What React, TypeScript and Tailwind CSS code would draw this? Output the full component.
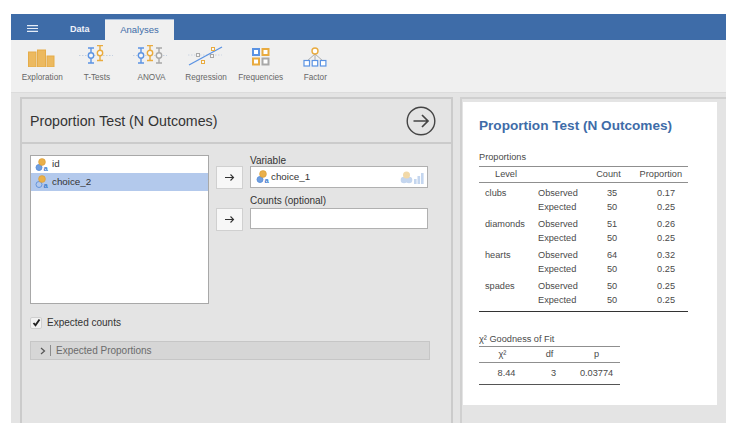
import { ReactNode } from "react";

const BLUE = "#5b93e3";
const ORANGE = "#e9ab3f";
const GREY = "#a8a8a8";

// error-bar glyph used by T-Tests / ANOVA
function Whisker({ x, y, h, c }: { x: number; y: number; h: number; c: string }) {
  return (
    <g stroke={c} strokeWidth="1.4" fill="none">
      <path d={`M${x - 3} ${y}h6M${x - 3} ${y + h}h6M${x} ${y}v${h / 2 - 3}M${x} ${y + h / 2 + 3}v${h / 2 - 3}`} />
      <circle cx={x} cy={y + h / 2} r="2.7" fill="#f7f7f7" />
    </g>
  );
}

function Exploration() {
  return (
    <svg width="30" height="20" viewBox="0 0 30 20">
      <rect x="1.5" y="5" width="7.5" height="15" fill="#ecb95f" stroke="#e5ac49" />
      <rect x="10.5" y="3" width="8" height="17" fill="#ecb95f" stroke="#e5ac49" />
      <rect x="20" y="9" width="7" height="11" fill="#ecb95f" stroke="#e5ac49" />
    </svg>
  );
}

function TTests() {
  return (
    <svg width="36" height="22" viewBox="0 0 36 22">
      <path d="M0 10.5h34" stroke="#b9c8dc" strokeWidth="0.8" strokeDasharray="1.5 1.5" />
      <Whisker x={12} y={3} h={15} c={BLUE} />
      <Whisker x={21} y={0.5} h={15} c={ORANGE} />
    </svg>
  );
}

function Anova() {
  return (
    <svg width="36" height="22" viewBox="0 0 36 22">
      <path d="M0 10.5h34" stroke="#b9c8dc" strokeWidth="0.8" strokeDasharray="1.5 1.5" />
      <Whisker x={8} y={3} h={15} c={BLUE} />
      <Whisker x={17} y={0.5} h={15} c={ORANGE} />
      <Whisker x={26} y={3} h={15} c={GREY} />
    </svg>
  );
}

function Regression() {
  return (
    <svg width="36" height="22" viewBox="0 0 36 22">
      <path d="M0 10h34" stroke="#c3cede" strokeWidth="0.8" strokeDasharray="1.5 1.5" />
      <path d="M1 20L34 2" stroke={BLUE} strokeWidth="1.3" />
      <g fill="#f7f7f7" strokeWidth="1">
        <rect x="8.5" y="8.5" width="3" height="3" stroke={GREY} />
        <rect x="13.5" y="15.5" width="3" height="3" stroke={ORANGE} />
        <rect x="23.5" y="2.5" width="3" height="3" stroke={ORANGE} />
        <rect x="22.5" y="9.5" width="3" height="3" stroke={GREY} />
      </g>
    </svg>
  );
}

function Frequencies() {
  return (
    <svg width="20" height="20" viewBox="0 0 20 20">
      <rect x="2" y="2" width="6" height="6" fill="#fff" stroke={BLUE} strokeWidth="2" />
      <rect x="11.5" y="2" width="6" height="6" fill="#fff" stroke={ORANGE} strokeWidth="2" />
      <rect x="2" y="11.5" width="6" height="6" fill="#fff" stroke={ORANGE} strokeWidth="2" />
      <rect x="11.5" y="11.5" width="6" height="6" fill="#fff" stroke={GREY} strokeWidth="2" />
    </svg>
  );
}

function Factor() {
  return (
    <svg width="24" height="20" viewBox="0 0 24 20">
      <path d="M12 7L4 14M12 7v7M12 7l8 7" stroke="#9a9a9a" strokeWidth="0.8" fill="none" />
      <circle cx="12" cy="4" r="3" fill="#fff" stroke={ORANGE} strokeWidth="1.4" />
      <g fill="#fff" stroke={BLUE} strokeWidth="1.2">
        <rect x="1" y="13.5" width="5.5" height="5.5" />
        <rect x="9.2" y="13.5" width="5.5" height="5.5" />
        <rect x="17.4" y="13.5" width="5.5" height="5.5" />
      </g>
    </svg>
  );
}

// nominal text variable icon
function VarIcon({ hollow = false }: { hollow?: boolean }) {
  return (
    <svg width="14" height="14" viewBox="0 0 14 14" className="shrink-0">
      <circle cx="4" cy="9.5" r="3" fill={hollow ? "none" : "#6f9fe0"} stroke="#5b8fd8" strokeWidth="0.9" />
      <circle cx="7" cy="4" r="3.4" fill="#eab04a" stroke="#d99a34" strokeWidth="0.6" />
      <text x="8.6" y="13" fontSize="7.5" fontWeight="700" fill="#3f7fd0" fontFamily="Liberation Sans">a</text>
    </svg>
  );
}

function ArrowButton() {
  return (
    <div className="w-[27px] h-[23px] bg-[#f7f7f7] border border-[#d0d0d0] flex items-center justify-center">
      <svg width="11" height="9" viewBox="0 0 11 9" fill="none" stroke="#333" strokeWidth="1.1">
        <path d="M1 4.5h8.5M6.5 1.5l3 3-3 3" />
      </svg>
    </div>
  );
}

function Tool({ icon, label }: { icon: ReactNode; label: string }) {
  return (
    <div className="w-[54.6px] flex flex-col items-center">
      <div className="h-[24px] flex items-end justify-center">{icon}</div>
      <div className="mt-[5px] text-[8.2px] leading-[11px] text-[#666] whitespace-nowrap">{label}</div>
    </div>
  );
}

const levels = [
  { name: "clubs", obs: 35, op: "0.17", ep: "0.25" },
  { name: "diamonds", obs: 51, op: "0.26", ep: "0.25" },
  { name: "hearts", obs: 64, op: "0.32", ep: "0.25" },
  { name: "spades", obs: 50, op: "0.25", ep: "0.25" },
];

function ProportionRow({ group, kind, count, prop }: { group: string; kind: string; count: number; prop: string }) {
  return (
    <div className="flex h-[13.5px] leading-[13.5px]">
      <span className="w-[59px] pl-[6px]">{group}</span>
      <span className="w-[61px]">{kind}</span>
      <span className="w-[26px] text-center">{count}</span>
      <span className="w-[50px] text-right">{prop}</span>
    </div>
  );
}

export default function App() {
  return (
    <div className="w-[740px] h-[439px] bg-white pt-[14px] pl-[11px] font-['Liberation_Sans',Arial,sans-serif]">
      <div className="w-[715px] h-[409px] flex flex-col bg-[#e4e4e4]">
        {/* top tabs */}
        <div className="h-[26px] shrink-0 bg-[#3e6ca8] flex items-end">
          <div className="w-[59px] h-full pl-[16px] pt-[3px] flex items-center">
            <svg width="11" height="7" viewBox="0 0 11 7" stroke="#e6edf7" strokeWidth="1.2">
              <path d="M0 .6h11M0 3.5h11M0 6.4h11" />
            </svg>
          </div>
          <div className="w-[35px] h-[21px] flex items-center text-[9px] font-bold text-[#eef3fa]">Data</div>
          <div className="w-[69px] h-[21px] bg-[#f0f0f0] border-t border-[#a9c0de] flex items-center justify-center text-[9.5px] text-[#3e6ca8]">
            Analyses
          </div>
        </div>

        {/* ribbon */}
        <div className="h-[53px] shrink-0 bg-[#f0f0f0] border-b border-[#dcdcdc] pl-[4px] flex items-start pt-[3px]">
          <Tool icon={<Exploration />} label="Exploration" />
          <Tool icon={<TTests />} label="T-Tests" />
          <Tool icon={<Anova />} label="ANOVA" />
          <Tool icon={<Regression />} label="Regression" />
          <Tool icon={<Frequencies />} label="Frequencies" />
          <Tool icon={<Factor />} label="Factor" />
        </div>

        <div className="flex-1 min-h-0 flex pl-[9px] pt-[4px]">
          {/* options panel */}
          <div className="w-[433px] h-full border-l-2 border-r-2 border-t-2 border-[#cbcbcb] shrink-0">
            <div className="h-[45px] border-b-2 border-[#cbcbcb] flex items-center justify-between pl-[8px] pr-[15px]">
              <div className="text-[14.2px] text-[#333] pt-[2px]">Proportion Test (N Outcomes)</div>
              <svg width="30" height="30" viewBox="0 0 30 30" fill="none" stroke="#444" strokeWidth="1.4" className="mt-[1px]">
                <circle cx="15" cy="15" r="13.8" />
                <path d="M7.5 15h14.5M16 9l6 6-6 6" strokeWidth="1.7" />
              </svg>
            </div>

            <div className="pl-[8px] pt-[11px]">
              <div className="flex">
                <div className="w-[179px] h-[149px] bg-white border border-[#a8a8a8] text-[9.8px] text-[#333]">
                  <div className="h-[17px] pl-[4px] flex items-center gap-[3px]">
                    <VarIcon />
                    id
                  </div>
                  <div className="h-[18px] pl-[4px] bg-[#b3c9ec] flex items-center gap-[3px]">
                    <VarIcon hollow />
                    choice_2
                  </div>
                </div>
                <div className="ml-[7px] w-[212px] pt-[11px]">
                  <div className="flex gap-[7px]">
                    <ArrowButton />
                    <div>
                      <div className="-mt-[11px] h-[11px] text-[10px] leading-[11px] text-[#333]">Variable</div>
                      <div className="w-[178px] h-[22px] bg-white border border-[#b0b0b0] flex items-center pl-[5px] pr-[2px] text-[9.8px] text-[#333]">
                        <VarIcon />
                        <span className="ml-[1px] flex-1">choice_1</span>
                        <svg width="25" height="13" viewBox="0 0 25 13">
                          <circle cx="4" cy="9" r="3.3" fill="#c4d6ef" />
                          <circle cx="9" cy="9" r="3.3" fill="#c4d6ef" />
                          <circle cx="6.5" cy="4" r="3.5" fill="#f2d9a8" />
                          <rect x="14" y="8" width="2.6" height="5" fill="#c4d6ef" />
                          <rect x="17.5" y="5" width="2.6" height="8" fill="#c4d6ef" />
                          <rect x="21" y="2" width="2.6" height="11" fill="#c4d6ef" />
                        </svg>
                      </div>
                    </div>
                  </div>
                  <div className="flex gap-[7px] mt-[19px]">
                    <ArrowButton />
                    <div>
                      <div className="-mt-[13px] h-[13px] text-[10px] leading-[11px] text-[#333]">Counts (optional)</div>
                      <div className="w-[178px] h-[21px] bg-white border border-[#b0b0b0]" />
                    </div>
                  </div>
                </div>
              </div>

              <div className="mt-[11px] flex items-center gap-[5px]">
                <div className="w-[12px] h-[12px] rounded-[2px] bg-[#f2f2f2] border border-[#cfcfcf] flex items-center justify-center">
                  <svg width="9" height="9" viewBox="0 0 9 9" fill="none" stroke="#222" strokeWidth="1.9">
                    <path d="M1.5 5l2 2.3L7.5 1.5" />
                  </svg>
                </div>
                <span className="text-[10px] text-[#333]">Expected counts</span>
              </div>

              <div className="mt-[11px] w-[400px] h-[19px] bg-[#d6d6d6] border border-[#c6c6c6] flex items-center pl-[9px] text-[10px] text-[#6b6b6b]">
                <svg width="6" height="8" viewBox="0 0 6 8" fill="none" stroke="#555" strokeWidth="1.2">
                  <path d="M1 1l3.5 3L1 7" />
                </svg>
                <span className="ml-[4px] h-[11px] border-l border-[#8c8c8c]" />
                <span className="ml-[5px]">Expected Proportions</span>
              </div>
            </div>
          </div>

          {/* results panel */}
          <div className="ml-[7px] flex-1 h-full border-l-2 border-t-2 border-[#d0d0d0] pl-[1px] pt-[3px] pr-[9px]">
            <div className="h-[303px] bg-white pl-[15px] text-[9.2px] text-[#4a4a4a]">
              <div className="pt-[15px] pl-[1px] h-[47px] text-[13.6px] leading-[18px] font-bold text-[#3e6ca8]">
                Proportion Test (N Outcomes)
              </div>
              <div className="h-[17px] leading-[16px] pl-[1px]">Proportions</div>

              <div className="w-[209px] ml-[1px]">
                <div className="flex h-[17px] leading-[14px] border-t border-b border-[#8f8f8f]">
                  <span className="w-[54px] text-center">Level</span>
                  <span className="w-[62px]" />
                  <span className="w-[27px] text-center">Count</span>
                  <span className="w-[60px] text-right">Proportion</span>
                </div>
                <div className="pt-[4px] pb-[4px] border-b border-[#333]">
                  {levels.map((l, i) => (
                    <div key={l.name} className={i === 0 ? "" : "pt-[4px]"}>
                      <ProportionRow group={l.name} kind="Observed" count={l.obs} prop={l.op} />
                      <ProportionRow group="" kind="Expected" count={50} prop={l.ep} />
                    </div>
                  ))}
                </div>
              </div>

              <div className="mt-[20px] h-[14px] leading-[14px] pl-[1px]">χ² Goodness of Fit</div>
              <div className="w-[141px] ml-[1px]">
                <div className="flex h-[17px] leading-[15px] border-t border-b border-[#8f8f8f] text-center">
                  <span className="w-[47px]">χ²</span>
                  <span className="w-[47px]">df</span>
                  <span className="w-[47px]">p</span>
                </div>
                <div className="flex h-[22px] items-center border-b border-[#555] text-center">
                  <span className="w-[55px]">8.44</span>
                  <span className="w-[39px]">3</span>
                  <span className="w-[47px]">0.03774</span>
                </div>
              </div>
            </div>
          </div>
        </div>
      </div>
    </div>
  );
}
